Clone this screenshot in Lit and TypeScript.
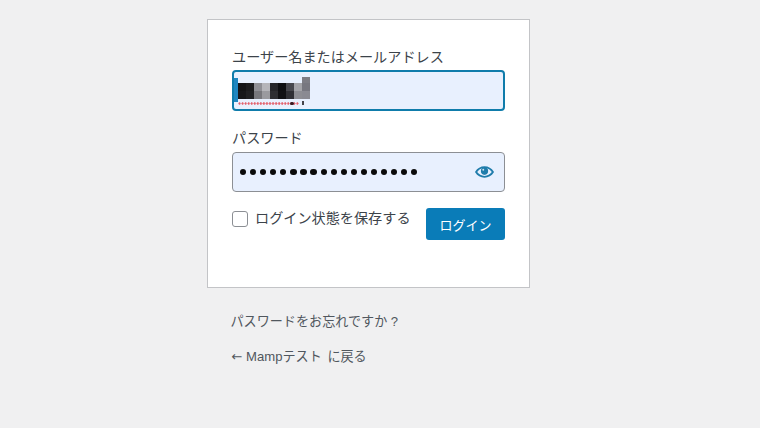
import { LitElement, html, css, svg } from "lit";
import { customElement } from "lit/decorators.js";

const MOSAIC: string[][] = [
  ["", "", "", "", "", "", "", "", "#7d7d85"],
  ["#141416", "#1c1c1e", "#8f8f95", "#b5b5ba", "#26262a", "#0f0f12", "#47474d", "#a4a4a9", "#777780"],
  ["#17171a", "#202023", "#77777c", "#9a9a9f", "#2e2e32", "#111114", "#2f2f34", "#8d8d93", "#8a8a92"],
];

@customElement("app-root")
export class AppRoot extends LitElement {
  static styles = css`
    :host {
      display: block;
      width: 760px;
      height: 428px;
      overflow: hidden;
      background: #f0f0f1;
      color: #3c434a;
      font-family: "Liberation Sans", "Noto Sans CJK JP", sans-serif;
      font-size: 14px;
    }
    .login {
      width: 323px;
      margin-left: 207px;
      padding-top: 19px;
    }
    .card {
      box-sizing: border-box;
      height: 269px;
      background: #fff;
      border: 1px solid #c3c4c7;
      padding: 27px 24px 0;
      display: flex;
      flex-direction: column;
    }
    label.title {
      display: block;
      line-height: 20px;
      height: 20px;
      font-size: 14.15px;
      color: #3c434a;
    }
    .input {
      box-sizing: border-box;
      width: 273px;
      height: 40px;
      margin-top: 4px;
      background: #e8f0fe;
      border: 1px solid #8c8f94;
      border-radius: 4px;
      display: flex;
      align-items: center;
      position: relative;
    }
    .input.focus {
      margin-top: 3px;
      height: 41px;
      border: 2px solid #0f7cab;
    }
    .pw {
      padding: 0 10px 0 7px;
      justify-content: space-between;
    }
    .field-gap {
      margin-top: 17px;
    }
    .dots {
      display: flex;
      gap: 3.88px;
    }
    .dot {
      width: 6.2px;
      height: 6.2px;
      border-radius: 50%;
      background: #0a0a0a;
    }
    .eye {
      display: block;
      width: 19px;
      height: 20px;
    }
    .caret {
      position: absolute;
      left: 0;
      top: 6px;
      width: 4px;
      height: 24px;
      background: #1f86c0;
    }
    .mosaic {
      position: absolute;
      left: 4px;
      top: 5px;
      display: grid;
      grid-template-columns: repeat(9, 8px);
      grid-template-rows: 6px 8px 8px;
      filter: blur(0.5px);
    }
    .squiggle {
      position: absolute;
      left: 4px;
      top: 30px;
      width: 61px;
      height: 3px;
      background-image: radial-gradient(circle, #e2626e 1px, transparent 1.3px);
      background-size: 3.05px 3px;
    }
    .squiggle-end {
      position: absolute;
      left: 56px;
      top: 29.5px;
      width: 3.5px;
      height: 3.5px;
      border-radius: 50%;
      background: #3a1a22;
    }
    .squiggle-tail {
      position: absolute;
      left: 68px;
      top: 29px;
      width: 2px;
      height: 4px;
      background: #44444a;
    }
    .row {
      display: flex;
      justify-content: space-between;
      margin-top: 16px;
    }
    .remember {
      display: flex;
      align-items: center;
      gap: 7px;
      height: 22px;
      font-size: 14.15px;
    }
    .remember-text {
      line-height: 20px;
      padding-bottom: 2px;
    }
    .check {
      box-sizing: border-box;
      width: 16px;
      height: 16px;
      background: #fff;
      border: 1px solid #8c8f94;
      border-radius: 3px;
    }
    .btn {
      box-sizing: border-box;
      width: 79px;
      height: 32px;
      background: #0a7cb8;
      color: #fff;
      border-radius: 3px;
      font-size: 13px;
      display: flex;
      align-items: center;
      justify-content: center;
    }
    .links {
      padding: 24px 0 0 23.5px;
      font-size: 13.1px;
      color: #50575e;
      line-height: 20px;
    }
    .links div + div {
      margin-top: 15px;
    }
    .arrow {
      font-family: "DejaVu Sans", sans-serif;
      margin-left: 1px;
    }
    .back {
      margin-left: 2px;
    }
  `;

  render() {
    return html`
      <div class="login">
        <div class="card">
          <label class="title">ユーザー名またはメールアドレス</label>
          <div class="input focus">
            <span class="caret"></span>
            <div class="mosaic">
              ${MOSAIC.flat().map(
                (c) => html`<span style="background:${c || "transparent"}"></span>`
              )}
            </div>
            <span class="squiggle"></span>
            <span class="squiggle-end"></span>
            <span class="squiggle-tail"></span>
          </div>
          <label class="title field-gap">パスワード</label>
          <div class="input pw">
            <div class="dots">
              ${Array.from({ length: 18 }, () => html`<span class="dot"></span>`)}
            </div>
            <svg class="eye" viewBox="0 0 20 20" fill="#1f7cab">
              ${svg`<path d="M19.700 9.400C17.700 6 14 3.900 10 3.900S2.300 6 .3 9.400L0 10l.3.6c2 3.400 5.700 5.500 9.700 5.500s7.700-2.100 9.700-5.500l.3-.6-.3-.6zM10 14.100c-3.100 0-6-1.600-7.700-4.100C3.600 8 5.700 6.600 8 6.100c-.9.6-1.500 1.700-1.500 2.900 0 1.900 1.600 3.500 3.500 3.500s3.500-1.600 3.500-3.500c0-1.200-.6-2.300-1.500-2.900 2.300.5 4.400 1.900 5.700 3.900-1.700 2.500-4.600 4.100-7.700 4.100z"/>
              <circle cx="10" cy="9" r="3.800"/>
              <circle cx="8.700" cy="7.600" r="1" fill="#cfe2f0"/>`}
            </svg>
          </div>
          <div class="row">
            <div class="remember">
              <span class="check"></span>
              <span class="remember-text">ログイン状態を保存する</span>
            </div>
            <div class="btn">ログイン</div>
          </div>
        </div>
        <div class="links">
          <div>パスワードをお忘れですか ?</div>
          <div><span class="arrow">←</span> Mampテスト <span class="back">に戻る</span></div>
        </div>
      </div>
    `;
  }
}
